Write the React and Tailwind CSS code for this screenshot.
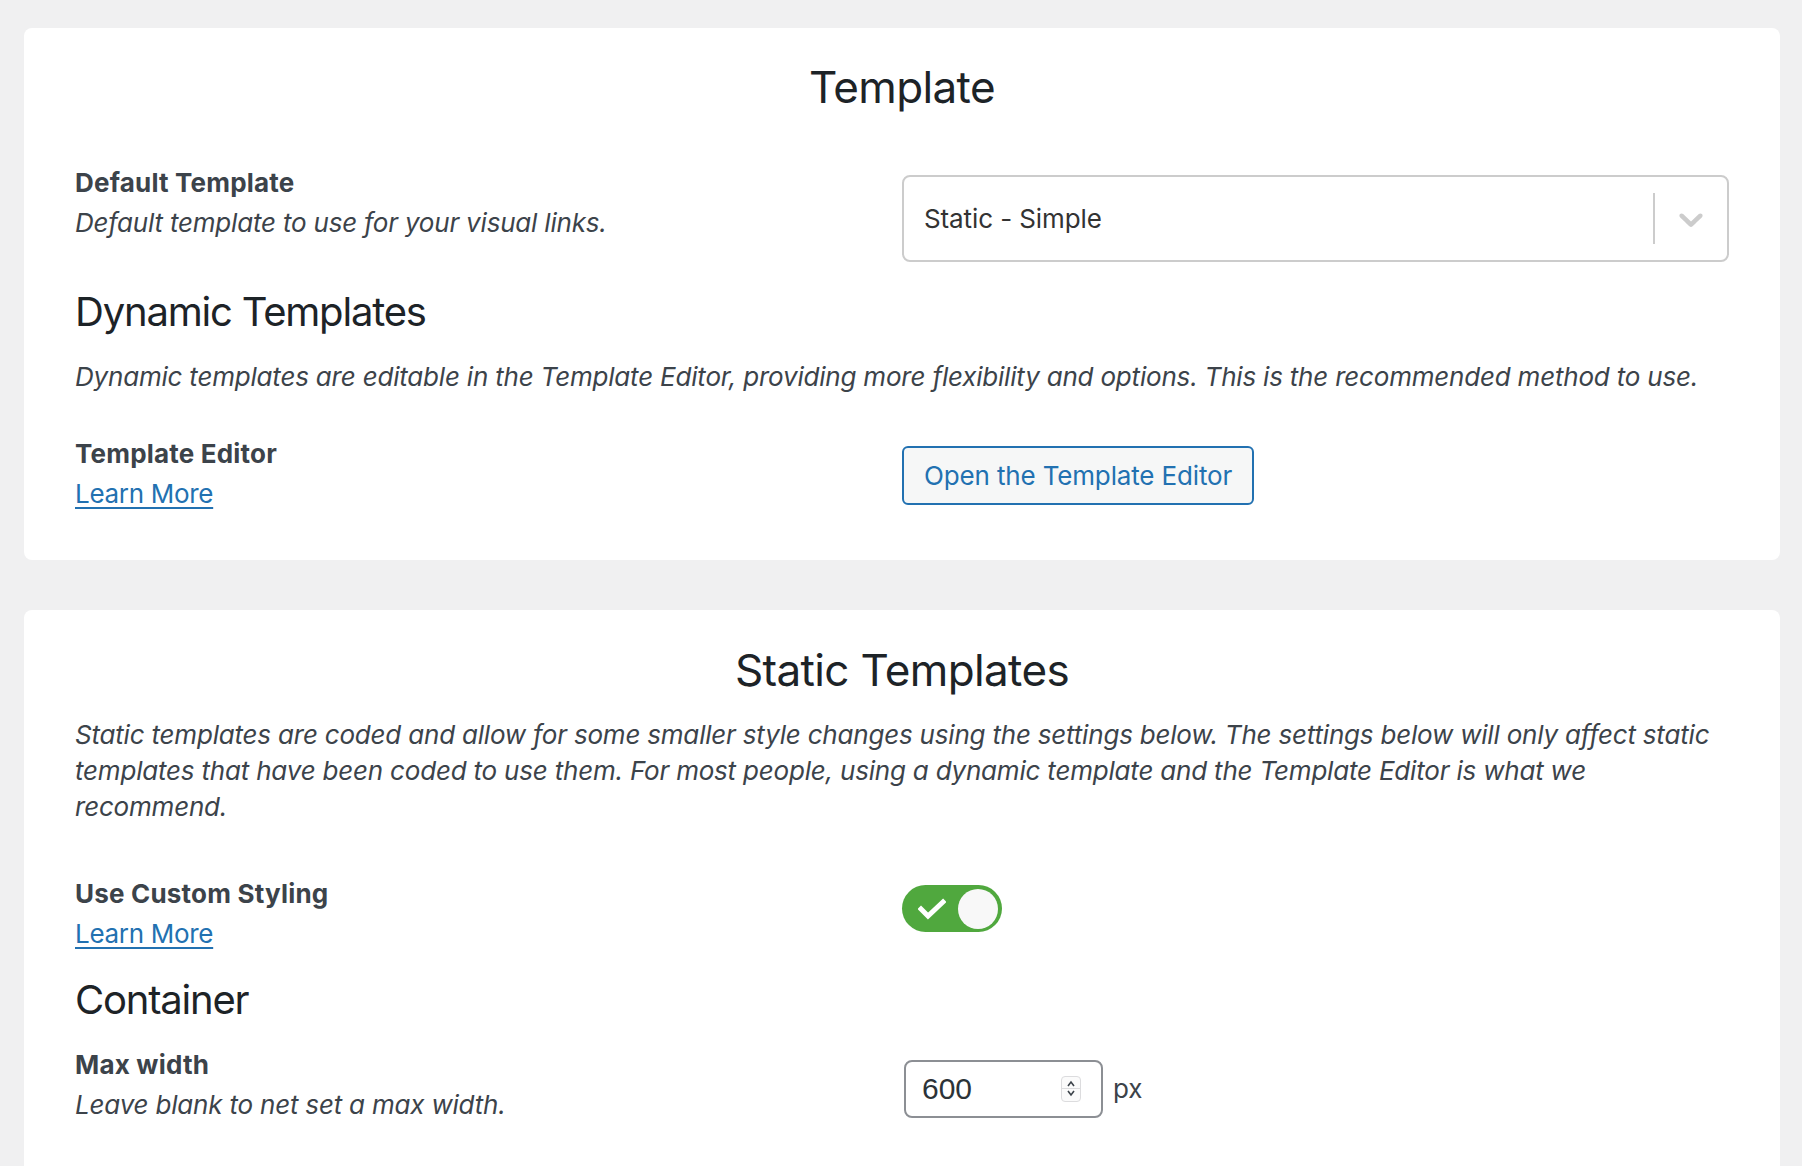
import { useState } from 'react';

const Chevron = () => (
  <svg width="40" height="40" viewBox="0 0 20 20" className="fill-[#cccccc]">
    <path d="M4.516 7.548c0.436-0.446 1.043-0.481 1.576 0l3.908 3.747 3.908-3.747c0.533-0.481 1.141-0.446 1.574 0 0.436 0.445 0.408 1.197 0 1.615-0.406 0.418-4.695 4.502-4.695 4.502-0.217 0.223-0.502 0.335-0.787 0.335s-0.57-0.112-0.789-0.335c0 0-4.287-4.084-4.695-4.502s-0.436-1.17 0-1.615z" />
  </svg>
);

const Label = ({ children }) => (
  <div className="text-[26px] leading-[40px] font-bold tracking-[0.2px] text-[#3c434a]">{children}</div>
);

const Help = ({ children }) => (
  <div className="text-[26px] leading-[40px] italic tracking-[-0.2px] text-[#3c434a]">{children}</div>
);

const LearnMore = () => (
  <a href="#" className="block w-fit text-[26px] leading-[40px] tracking-[-0.3px] text-[#2271b1] underline underline-offset-[4px] decoration-[2px]">
    Learn More
  </a>
);

const SectionHeading = ({ children, className = '' }) => (
  <h3 className={`text-[40px] leading-[52px] font-normal tracking-[-1.2px] text-[#1d2327] ${className}`}>{children}</h3>
);

const CardTitle = ({ children }) => (
  <h2 className="text-[44px] leading-[56px] font-normal tracking-[-0.65px] text-center text-[#1d2327]">{children}</h2>
);

const Toggle = ({ on, onChange }) => (
  <button
    onClick={() => onChange(!on)}
    className={`relative flex items-center w-[100px] h-[47px] rounded-full ${on ? 'bg-[#50a83e]' : 'bg-[#c3c4c7]'}`}
  >
    <svg width="28" height="22" viewBox="0 0 28 22" className="ml-[16px]">
      <polyline points="3,11 10,18 25,4" fill="none" stroke="white" strokeWidth="5" strokeLinecap="square" />
    </svg>
    <span className="absolute right-[4px] top-[3.5px] w-[40px] h-[40px] rounded-full bg-[#f8f8f8]" />
  </button>
);

export default function App() {
  const [customStyling, setCustomStyling] = useState(true);

  return (
    <div className="min-h-screen bg-[#f0f0f1] pl-[24px] pr-[22px] pt-[28px] font-['Inter','Noto_Sans',sans-serif]">
      {/* Template */}
      <div className="bg-white rounded-[8px] px-[51px] pt-[31px] pb-[46px]">
        <CardTitle>Template</CardTitle>

        <div className="grid grid-cols-2 mt-[48px]">
          <div>
            <Label>Default Template</Label>
            <Help>Default template to use for your visual links.</Help>
          </div>
          <div className="mt-[12px]">
            <div className="flex items-center h-[87px] border-2 border-[#cccccc] rounded-[8px] pl-[20px]">
              <span className="flex-1 text-[26px] tracking-[-0.1px] text-[#333333]">Static - Simple</span>
              <span className="w-[2px] h-[51px] bg-[#cccccc]" />
              <span className="px-[16px] flex items-center">
                <Chevron />
              </span>
            </div>
          </div>
        </div>

        <SectionHeading className="mt-[24px]">Dynamic Templates</SectionHeading>
        <div className="mt-[19px]">
          <Help>Dynamic templates are editable in the Template Editor, providing more flexibility and options. This is the recommended method to use.</Help>
        </div>

        <div className="grid grid-cols-2 mt-[37px]">
          <div>
            <Label>Template Editor</Label>
            <LearnMore />
          </div>
          <div className="mt-[12px]">
            <button className="h-[59px] px-[20px] border-2 border-[#2271b1] bg-[#f6f7f7] rounded-[6px] text-[26px] tracking-[-0.15px] text-[#2271b1]">
              Open the Template Editor
            </button>
          </div>
        </div>
      </div>

      {/* Static Templates */}
      <div className="mt-[50px] bg-white rounded-[8px] px-[51px] pt-[32px] pb-[60px]">
        <CardTitle>Static Templates</CardTitle>
        <p className="mt-[19px] text-[26px] leading-[36px] italic tracking-[-0.2px] text-[#3c434a]">
          Static templates are coded and allow for some smaller style changes using the settings below. The settings below will only affect static templates that have been coded to use them. For most people, using a dynamic template and the Template Editor is what we recommend.
        </p>

        <div className="grid grid-cols-2 mt-[49px]">
          <div>
            <Label>Use Custom Styling</Label>
            <LearnMore />
          </div>
          <div className="mt-[11px]">
            <Toggle on={customStyling} onChange={setCustomStyling} />
          </div>
        </div>

        <SectionHeading className="mt-[20px]">Container</SectionHeading>

        <div className="grid grid-cols-2 mt-[19px]">
          <div>
            <Label>Max width</Label>
            <Help>Leave blank to net set a max width.</Help>
          </div>
          <div className="mt-[7px] ml-[2px] flex items-center gap-[10px]">
            <div className="flex items-center w-[199px] h-[58px] border-2 border-[#8c8f94] rounded-[8px] pl-[16px] pr-[20px]">
              <span className="flex-1 text-[30px] text-[#2c3338] font-['Liberation_Sans',sans-serif]">600</span>
              <span className="flex flex-col items-center justify-center w-[20px] h-[26px] rounded-[4px] border border-[#dcdcde] bg-[#fbfbfb]">
                <svg width="10" height="8" viewBox="0 0 10 8"><polyline points="2,6 5,2 8,6" fill="none" stroke="#3c434a" strokeWidth="1.6" /></svg>
                <span className="w-full h-px bg-[#dcdcde]" />
                <svg width="10" height="8" viewBox="0 0 10 8"><polyline points="2,2 5,6 8,2" fill="none" stroke="#3c434a" strokeWidth="1.6" /></svg>
              </span>
            </div>
            <span className="text-[26px] text-[#3c434a]">px</span>
          </div>
        </div>
      </div>
    </div>
  );
}
